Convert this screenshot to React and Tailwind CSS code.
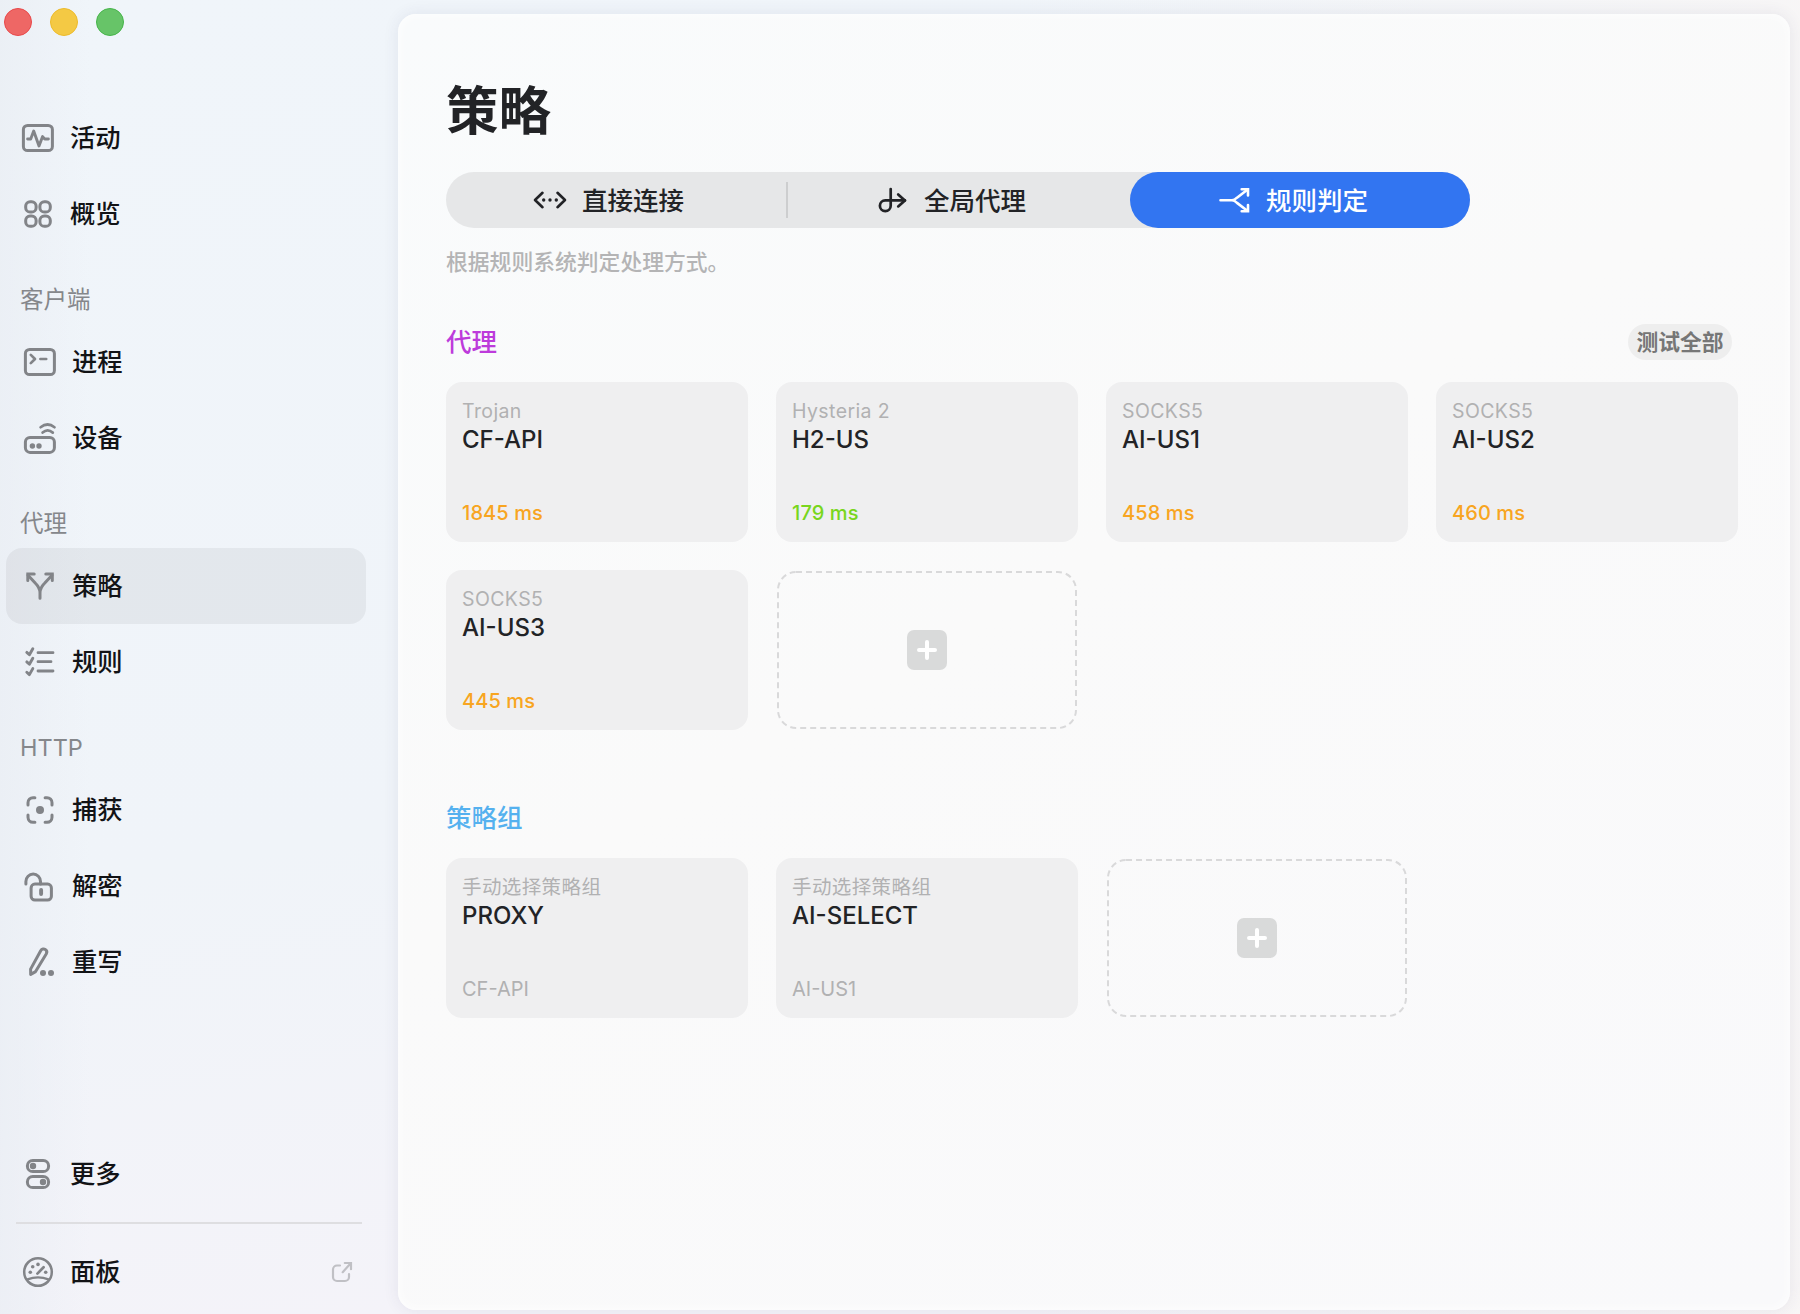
const strokeProps = {
  fill: "none",
  stroke: "currentColor",
  strokeWidth: 3,
  strokeLinecap: "round",
  strokeLinejoin: "round",
};

function Icon({ children, className = "size-9 text-[#828488]" }) {
  return (
    <svg viewBox="0 0 36 36" className={`shrink-0 ${className}`} {...strokeProps}>
      {children}
    </svg>
  );
}

function Dot({ x, y, r }) {
  return <circle cx={x} cy={y} r={r} fill="currentColor" stroke="none" />;
}

const icons = {
  activity: (
    <Icon>
      <rect x="3.4" y="5.4" width="29" height="25.2" rx="4.2" />
      <path d="M7.6 19h3.1l3-8 5.3 15 3.6-9.4 2.1 2.4h3.7" strokeWidth="2.9" />
    </Icon>
  ),
  overview: (
    <Icon>
      <rect x="5.7" y="5.7" width="10.4" height="10.4" rx="4.4" />
      <rect x="19.9" y="5.7" width="10.4" height="10.4" rx="4.4" />
      <rect x="5.7" y="19.9" width="10.4" height="10.4" rx="4.4" />
      <rect x="19.9" y="19.9" width="10.4" height="10.4" rx="4.4" />
    </Icon>
  ),
  process: (
    <Icon>
      <rect x="3.4" y="5.4" width="29" height="25.2" rx="4.2" />
      <path d="M8.8 10.9l4.2 4.1-4.2 4.1M18.4 15h5.8" strokeWidth="2.7" />
    </Icon>
  ),
  device: (
    <Icon>
      <rect x="3.4" y="17.4" width="29" height="15" rx="4.6" />
      <path d="M18.6 7.2q7-5.4 13.9 0M20.6 12.6q5-4.4 10.2 0" strokeWidth="2.7" />
      <Dot x={10.4} y={26} r={2.7} />
      <Dot x={17} y={26} r={2.7} />
    </Icon>
  ),
  policy: (
    <Icon>
      <path d="M18 30.3V25c0-4.5-2-7.200-4.800-10L6 7.200M18 25c0-4.500 2-7.200 4.800-10L30 7.200" />
      <path d="M12.2 5.9H5.800v6.500M23.800 5.900h6.500v6.500" strokeLinejoin="miter" />
    </Icon>
  ),
  rules: (
    <Icon>
      <path d="M16 8.7h15M16 17.7h13M16 27h15" strokeWidth="2.8" />
      <path d="M4.8 8.4l2.600 2.400 3.400-6M4.800 17.900l2.600 2.400 3.400-6M4.800 28.200l2.600 2.400 3.400-6" strokeWidth="2.9" />
    </Icon>
  ),
  capture: (
    <Icon>
      <path d="M12.900 5.700H11a5 5 0 0 0-5 5v2.300M23.100 5.700H25a5 5 0 0 1 5 5v2.300M12.900 30.300H11a5 5 0 0 1-5-5V23M23.100 30.300H25a5 5 0 0 0 5-5V23" />
      <Dot x={18} y={18} r={4} />
    </Icon>
  ),
  decrypt: (
    <Icon>
      <rect x="9.100" y="16.100" width="20.300" height="15.900" rx="3.800" />
      <path d="M3.900 16v-2.600a7.300 7.300 0 0 1 14.600 0V16" />
      <path d="M19.100 22v4" strokeWidth="3.900" />
    </Icon>
  ),
  rewrite: (
    <Icon>
      <path d="M8.700 30.400l-.1-5.300L18.700 6.700c1.100-2 3.300-2 4.600-1.200s1.900 2.600.9 4.400L13.600 27.600z" />
      <Dot x={21} y={29} r={3} />
      <Dot x={29} y={29} r={3} />
    </Icon>
  ),
  more: (
    <Icon>
      <rect x="7.400" y="4.400" width="21.200" height="11.200" rx="5.400" />
      <rect x="7.400" y="20.400" width="21.200" height="11.200" rx="5.400" />
      <Dot x={13} y={10} r={3.2} />
      <Dot x={23} y={26} r={3.2} />
    </Icon>
  ),
  dashboard: (
    <Icon>
      <circle cx="18" cy="18" r="13.800" strokeWidth="2.500" />
      <path d="M17.400 19.600l6.200-6.300" strokeWidth="2.700" />
      <path d="M7.500 25.300q10.500-3.800 21 0" strokeWidth="2.400" />
      <Dot x={10.300} y={18.300} r={1.8} />
      <Dot x={12.700} y={12.800} r={1.8} />
      <Dot x={18} y={10.400} r={1.8} />
      <Dot x={25.700} y={18.300} r={1.8} />
    </Icon>
  ),
};

const sections = [
  {
    items: [
      { icon: "activity", label: "活动" },
      { icon: "overview", label: "概览" },
    ],
  },
  {
    title: "客户端",
    items: [
      { icon: "process", label: "进程" },
      { icon: "device", label: "设备" },
    ],
  },
  {
    title: "代理",
    items: [
      { icon: "policy", label: "策略", active: true },
      { icon: "rules", label: "规则" },
    ],
  },
  {
    title: "HTTP",
    items: [
      { icon: "capture", label: "捕获" },
      { icon: "decrypt", label: "解密" },
      { icon: "rewrite", label: "重写" },
    ],
  },
];

const orange = "text-[#f8a521] font-medium tracking-[0.1px]";
const green = "text-[#79d61d] font-medium tracking-[0.1px]";
const gray = "text-[#b1b1b2]";

const proxies = [
  { type: "Trojan", name: "CF-API", info: "1845 ms", color: orange },
  { type: "Hysteria 2", name: "H2-US", info: "179 ms", color: green },
  { type: "SOCKS5", name: "AI-US1", info: "458 ms", color: orange },
  { type: "SOCKS5", name: "AI-US2", info: "460 ms", color: orange },
  { type: "SOCKS5", name: "AI-US3", info: "445 ms", color: orange },
];

const groups = [
  { type: "手动选择策略组", name: "PROXY", info: "CF-API", color: gray },
  { type: "手动选择策略组", name: "AI-SELECT", info: "AI-US1", color: gray },
];

function NavItem({ icon, label, active, inset = "pl-4" }) {
  return (
    <div
      className={`flex h-[76px] items-center gap-[14px] rounded-2xl text-[25.3px] font-medium text-[#121316] ${inset} ${
        active ? "bg-black/5" : ""
      }`}
    >
      {icons[icon]}
      <span>{label}</span>
    </div>
  );
}

function Sidebar() {
  return (
    <aside className="flex w-[398px] shrink-0 flex-col pl-1.5 pr-8">
      <div className="-ml-0.5 flex h-[100px] gap-[18px] pt-2">
        <span className="size-7 rounded-full border border-[#e9484a] bg-[#ee6765]" />
        <span className="size-7 rounded-full border border-[#edbb2b] bg-[#f4c944]" />
        <span className="size-7 rounded-full border border-[#46b54a] bg-[#67c468]" />
      </div>

      {sections.map((section, i) => (
        <div key={i}>
          {section.title && (
            <h2 className="mt-6 flex h-12 items-center pl-3.5 text-[23.5px] text-[#85878b]">
              {section.title}
            </h2>
          )}
          {section.items.map((item) => (
            <NavItem key={item.label} {...item} inset={section.title ? "pl-4" : "pl-3.5"} />
          ))}
        </div>
      ))}

      <div className="mt-auto">
        <NavItem icon="more" label="更多" inset="pl-3.5" />
        <div className="ml-2.5 mr-0.5 mt-[10px] h-0.5 w-[346px] bg-[#dedee1]" />
        <div className="flex h-[90px] items-center justify-between pr-2.5 pt-1.5">
          <NavItem icon="dashboard" label="面板" inset="pl-3.5" />
          <svg viewBox="0 0 28 28" className="size-7 text-[#c0c0c5]" {...strokeProps} strokeWidth="2.2">
            <path d="M12 7.500H9a4 4 0 0 0-4 4V19a4 4 0 0 0 4 4h8a4 4 0 0 0 4-4v-3" />
            <path d="M14.700 14.200L22.500 5.500M16.800 5h6.200v6.200" strokeLinejoin="miter" />
          </svg>
        </div>
      </div>
    </aside>
  );
}

function ModeSwitch() {
  return (
    <div className="flex h-14 w-[1024px] rounded-full bg-[#e6e7e8] text-[25.5px] font-medium text-[#222326]">
      <div className="flex w-[340px] items-center gap-[14px] pl-[86px]">
        <Icon className="size-9">
          <path d="M10.500 10.800L3 18l7.500 7.200M25.500 10.800L33 18l-7.500 7.200" strokeWidth="2.600" />
          <Dot x={11.700} y={18} r={1.7} />
          <Dot x={18} y={18} r={1.7} />
          <Dot x={24.300} y={18} r={1.7} />
        </Icon>
        <span className="pt-0.5">直接连接</span>
      </div>
      <div className="h-9 w-0.5 self-center bg-[#cdcecf]" />
      <div className="flex w-[340px] items-center gap-[14px] pl-[86px]">
        <Icon className="size-9">
          <path d="M16.700 7v16.800a5.400 5.400 0 1 1-5.400-5.400H31" strokeWidth="2.700" />
          <path d="M24.200 12.400l6.700 6-6.700 6" strokeWidth="2.700" />
        </Icon>
        <span className="pt-0.5">全局代理</span>
      </div>
      <div className="ml-0.5 flex w-[340px] items-center gap-[14px] rounded-full bg-[#3275f1] pl-[86px] text-white">
        <Icon className="size-9">
          <path d="M4.500 18.300h11.500c2 0 3.400-1 5-2.600L31 8M16 18.300c2 0 3.400 1 5 2.600L31 28.500" strokeWidth="2.600" />
          <path d="M25.700 7.200H32v6.300M25.700 29.300H32V23" strokeWidth="2.600" strokeLinejoin="miter" />
        </Icon>
        <span className="pt-0.5">规则判定</span>
      </div>
    </div>
  );
}

function PolicyCard({ type, name, info, color }) {
  return (
    <div className="flex h-40 flex-col rounded-2xl bg-[#efeff0] px-4 pb-[15px] pt-4">
      <p className="text-[19.5px] leading-[26px] tracking-[0.4px] text-[#b1b1b2]">{type}</p>
      <h3 className="text-[24px] font-medium leading-8 text-[#222326]">{name}</h3>
      <p className={`mt-auto text-[20px] leading-7 ${color}`}>{info}</p>
    </div>
  );
}

function AddCard() {
  return (
    <div className="flex h-40 items-center justify-center">
      <svg viewBox="0 0 302 160" className="h-40 w-[302px]" fill="none">
        <rect x="2" y="2" width="298" height="156" rx="18" stroke="#d9d9da" strokeWidth="2" strokeDasharray="6 4" />
        <rect x="131" y="60" width="40" height="40" rx="7" fill="#d9dada" />
        <path d="M151 72v16M143 80h16" stroke="white" strokeWidth="4" strokeLinecap="round" />
      </svg>
    </div>
  );
}

export default function App() {
  return (
    <div className="flex h-[1314px] w-[1800px] overflow-hidden bg-[linear-gradient(170deg,#f0f5fa_0%,#f0f4f9_55%,#f4f3f9_85%,#f5f3f9_100%)] font-[Inter,'Noto_Sans_CJK_SC',sans-serif]">
      <div className="flex w-full bg-[linear-gradient(90deg,rgba(233,237,243,0.7)_0px,rgba(240,244,249,0)_90px,rgba(248,246,246,0)_1000px,rgba(248,246,246,0.9)_1800px)]">
        <Sidebar />
        <main className="mb-1 mr-2.5 mt-3.5 flex flex-1 flex-col rounded-[18px] bg-[linear-gradient(150deg,#f9fbfc_0%,#fafafa_45%,#f9f9fb_100%)] pl-12 pr-[52px] pt-16 shadow-[0_0_16px_rgba(60,60,100,0.09),inset_0_0_12px_rgba(255,255,255,0.9)]">
          <h1 className="flex h-[64px] items-center pt-0.5 text-[52.5px] font-bold text-[#222326]">策略</h1>
          <div className="mt-[30px]">
            <ModeSwitch />
          </div>
          <p className="mt-[18px] text-[21.8px] font-medium leading-8 text-[#b4b4b5]">
            根据规则系统判定处理方式。
          </p>

          <div className="mt-[42px] flex h-[44px] items-center justify-between pr-1.5">
            <h2 className="text-[25.5px] font-medium text-[#bd3bdb]">代理</h2>
            <button className="flex h-9 w-[104px] items-center justify-center rounded-full bg-[#eeeeee] text-[21.8px] font-bold text-[#767676]">
              测试全部
            </button>
          </div>
          <div className="mt-[18px] grid grid-cols-4 gap-7">
            {proxies.map((proxy) => (
              <PolicyCard key={proxy.name} {...proxy} />
            ))}
            <AddCard />
          </div>

          <h2 className="mt-[66px] flex h-[44px] items-center text-[25.5px] font-medium text-[#55b1ef]">
            策略组
          </h2>
          <div className="mt-[18px] grid grid-cols-4 gap-7">
            {groups.map((group) => (
              <PolicyCard key={group.name} {...group} />
            ))}
            <AddCard />
          </div>
        </main>
      </div>
    </div>
  );
}
